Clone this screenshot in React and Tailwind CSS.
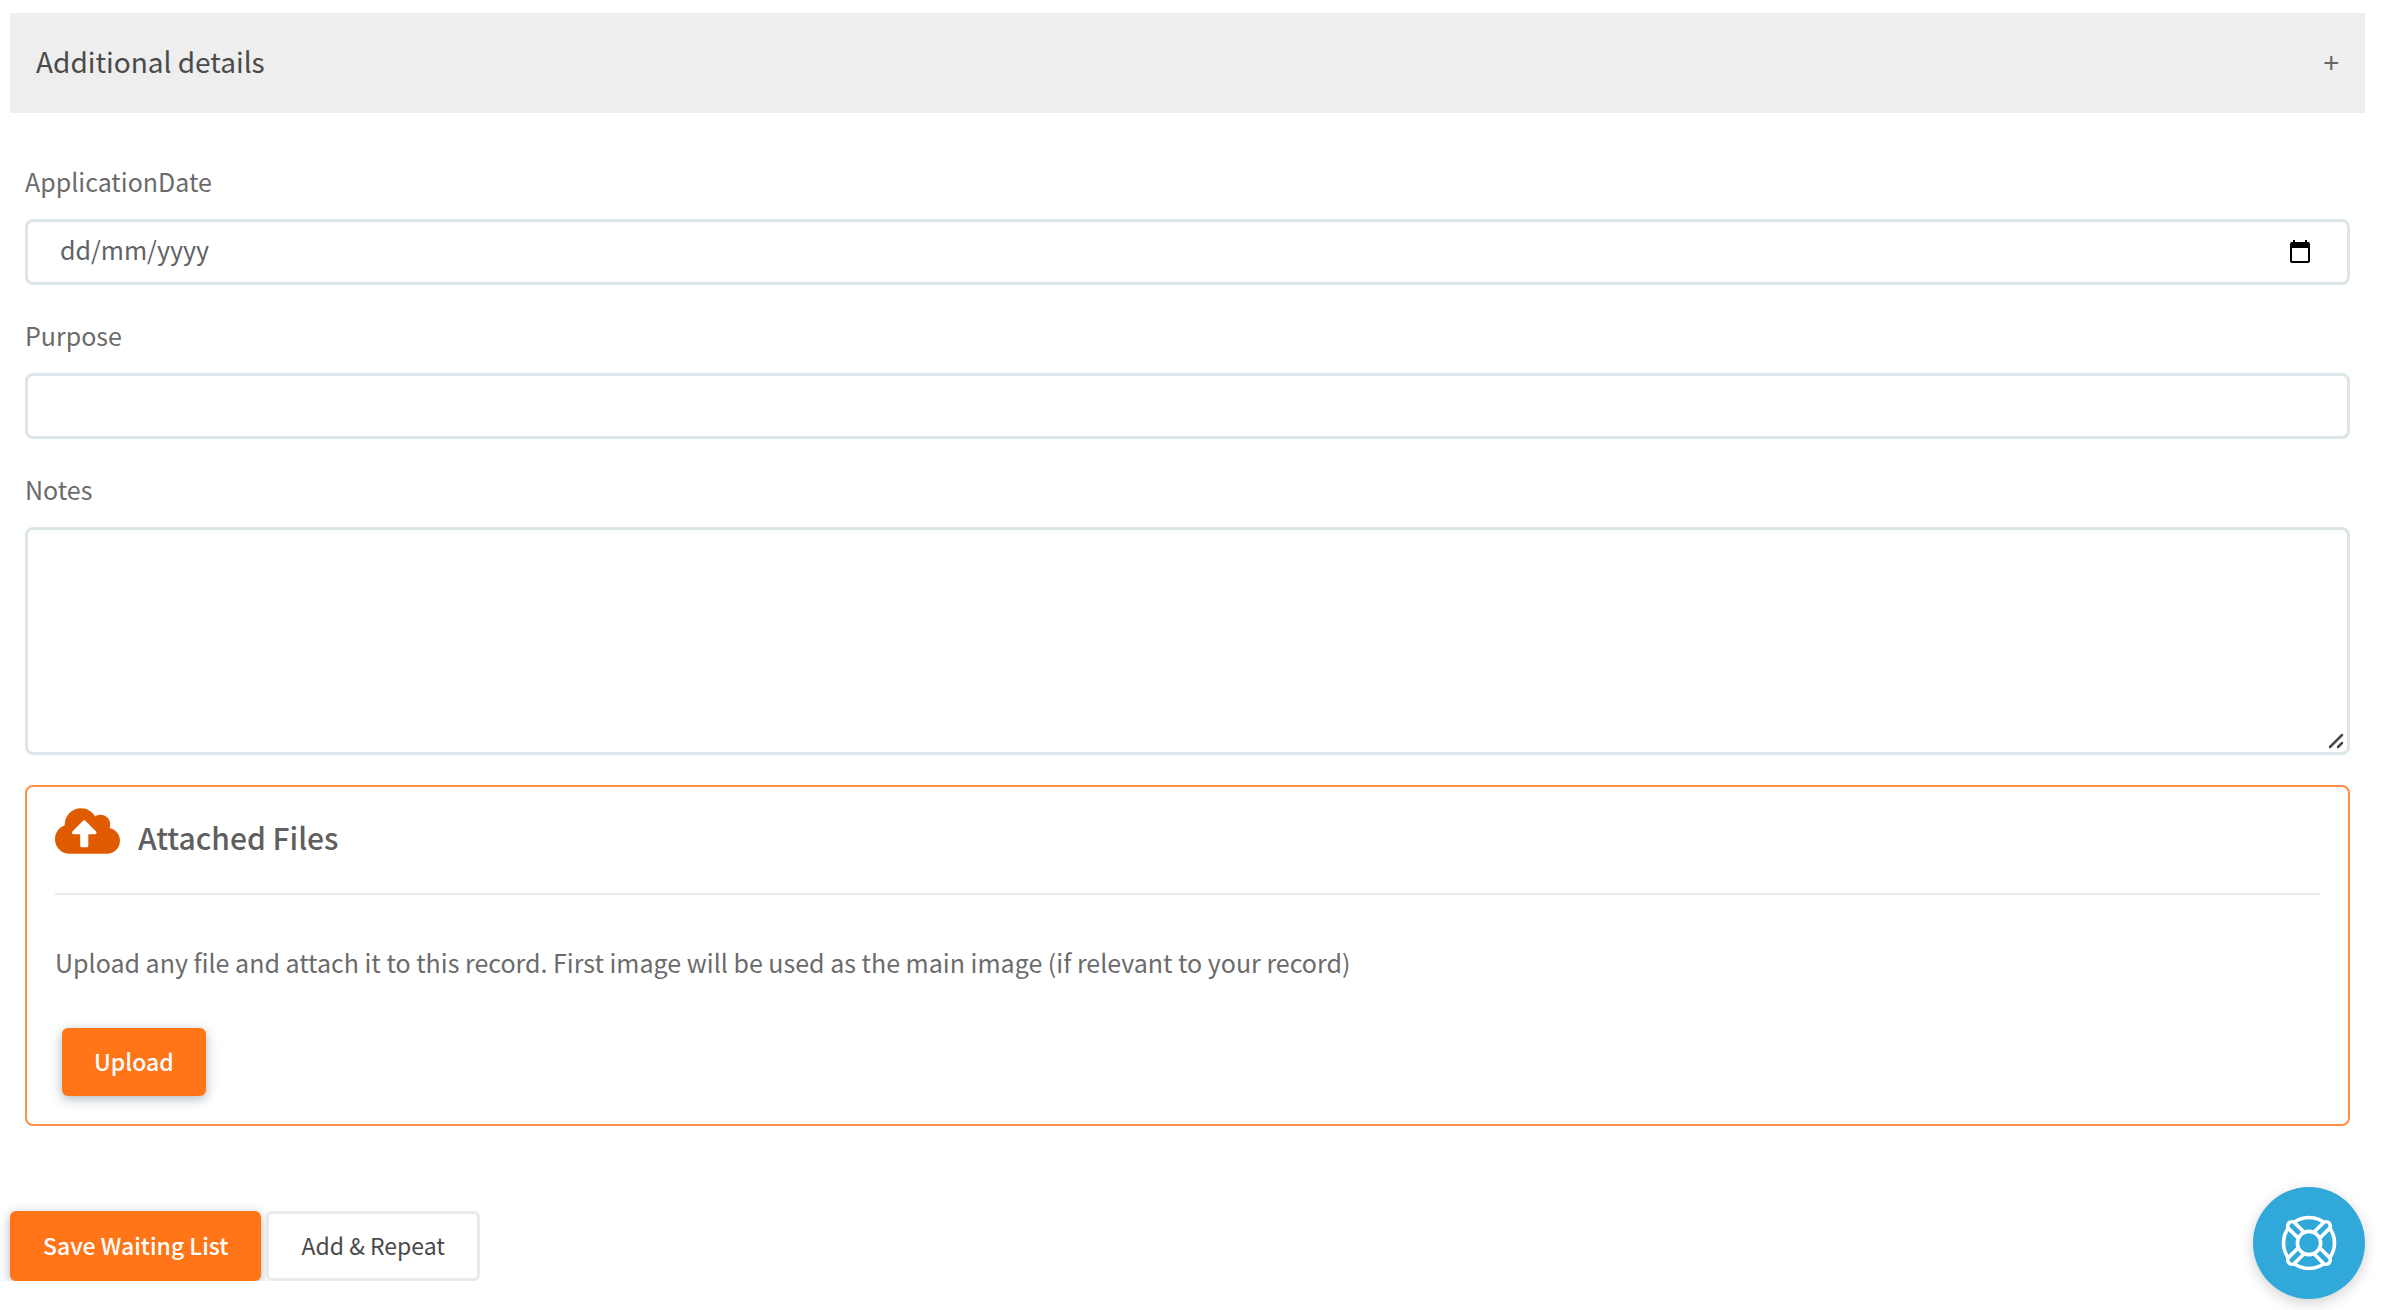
import { FaCloudUploadAlt } from "react-icons/fa";

const fieldClass =
  "block w-full rounded-lg border-[3px] border-[#dce6e9] bg-white px-8 text-[25px] text-[#5f6368] placeholder:text-[#5f6368] placeholder:opacity-100 outline-none focus:border-[#ff7518]";
const labelClass = "mb-[18px] block text-[25px] leading-10 text-[#6b6b6b]";
const primaryClass =
  "rounded-md bg-[#ff7518] pb-0.5 text-[23px] leading-8 font-medium text-white shadow-[0_3px_12px_rgba(60,75,90,0.4)]";

function CalendarIcon() {
  return (
    <svg viewBox="0 0 20 24" className="h-6 w-5" fill="none" aria-hidden="true">
      <path d="M3 0h2v2h10V0h2v2h1a2 2 0 0 1 2 2v17a2 2 0 0 1-2 2H2a2 2 0 0 1-2-2V4a2 2 0 0 1 2-2h1zM2 8v13h16V8z" fill="#000" />
    </svg>
  );
}

function ResizeGrip() {
  return (
    <svg
      viewBox="0 0 16 16"
      className="pointer-events-none absolute right-1.5 bottom-1.5 size-4"
      stroke="#4a4a4a"
      strokeWidth="2.5"
      strokeLinecap="round"
      aria-hidden="true"
    >
      <path d="M2 14 14 2M10 14l4-4" />
    </svg>
  );
}

function LifebuoyIcon() {
  return (
    <svg viewBox="0 0 56 56" className="size-14" fill="none" stroke="#fff" strokeWidth="3.6" aria-hidden="true">
      <circle cx="28" cy="28" r="25.5" />
      <g fill="#31a8da" strokeLinejoin="round">
        {[45, 135, 225, 315].map((angle) => (
          <path
            key={angle}
            transform={`rotate(${angle} 28 28)`}
            d="M23.8 16.5V3.8a4.2 4.2 0 0 1 8.4 0v12.7"
          />
        ))}
      </g>
      <circle cx="28" cy="28" r="11.6" fill="#31a8da" />
    </svg>
  );
}

export default function App() {
  return (
    <div className="bg-white pt-[13px] pr-[34px] pl-2.5 font-['Noto_Sans_CJK_SC',sans-serif]">
      <button
        type="button"
        aria-label="Additional details"
        className="flex h-25 w-full items-center justify-between bg-[#eee] px-[26px] pb-1 text-left"
      >
        <span className="text-[28px] leading-10 text-[#4a4a4a]">Additional details</span>
        <span className="text-[28px] leading-10 text-[#666]">+</span>
      </button>

      <form onSubmit={(e) => e.preventDefault()}>
        <div className="flex flex-col gap-[30px] px-[15px] pt-12">
          <div>
            <label htmlFor="date" className={labelClass}>ApplicationDate</label>
            <div className="relative">
              <input id="date" type="text" placeholder="dd/mm/yyyy" className={`${fieldClass} h-[66px] pb-1.5`} />
              <button type="button" aria-label="Open calendar" className="absolute inset-y-0 right-10 flex items-center">
                <CalendarIcon />
              </button>
            </div>
          </div>
          <div>
            <label htmlFor="purpose" className={labelClass}>Purpose</label>
            <input id="purpose" type="text" className={`${fieldClass} h-[66px] pb-1.5`} />
          </div>
          <div>
            <label htmlFor="notes" className={labelClass}>Notes</label>
            <div className="relative">
              <textarea id="notes" className={`${fieldClass} h-[228px] resize-none py-3`} />
              <ResizeGrip />
            </div>
          </div>

          <section className="rounded-lg border-2 border-[#ff8f45] px-7 pt-[18px] pb-7">
            <div className="flex h-[90px] items-start gap-[18px] border-b-2 border-[#e8ecee]">
              <FaCloudUploadAlt className="h-[52px] w-[65px] text-[#e05a00]" aria-hidden="true" />
              <h2 className="pt-3 text-[30px] leading-10 font-medium text-[#5f5f5f]">Attached Files</h2>
            </div>
            <p className="pt-[47px] text-[25px] leading-10 text-[#6b6b6b]">
              Upload any file and attach it to this record. First image will be used as the main image (if relevant to your record)
            </p>
            <button type="button" className={`${primaryClass} mt-[46px] ml-[7px] block h-17 px-8`}>Upload</button>
          </section>
        </div>

        <div className="mt-[85px] flex items-center gap-[5px]">
          <button type="submit" className={`${primaryClass} h-[70px] px-[33px]`}>Save Waiting List</button>
          <button
            type="button"
            className="h-[70px] rounded-md border-[3px] border-[#eaeaea] bg-white px-8 pb-0.5 text-[23px] leading-8 text-[#4a4a4a]"
          >
            Add &amp; Repeat
          </button>
        </div>
      </form>

      <button
        type="button"
        aria-label="Help"
        className="fixed right-[34px] bottom-[11px] flex size-28 items-center justify-center rounded-full bg-[#31a8da] shadow-[0_4px_14px_rgba(0,0,0,0.18)]"
      >
        <LifebuoyIcon />
      </button>
    </div>
  );
}
